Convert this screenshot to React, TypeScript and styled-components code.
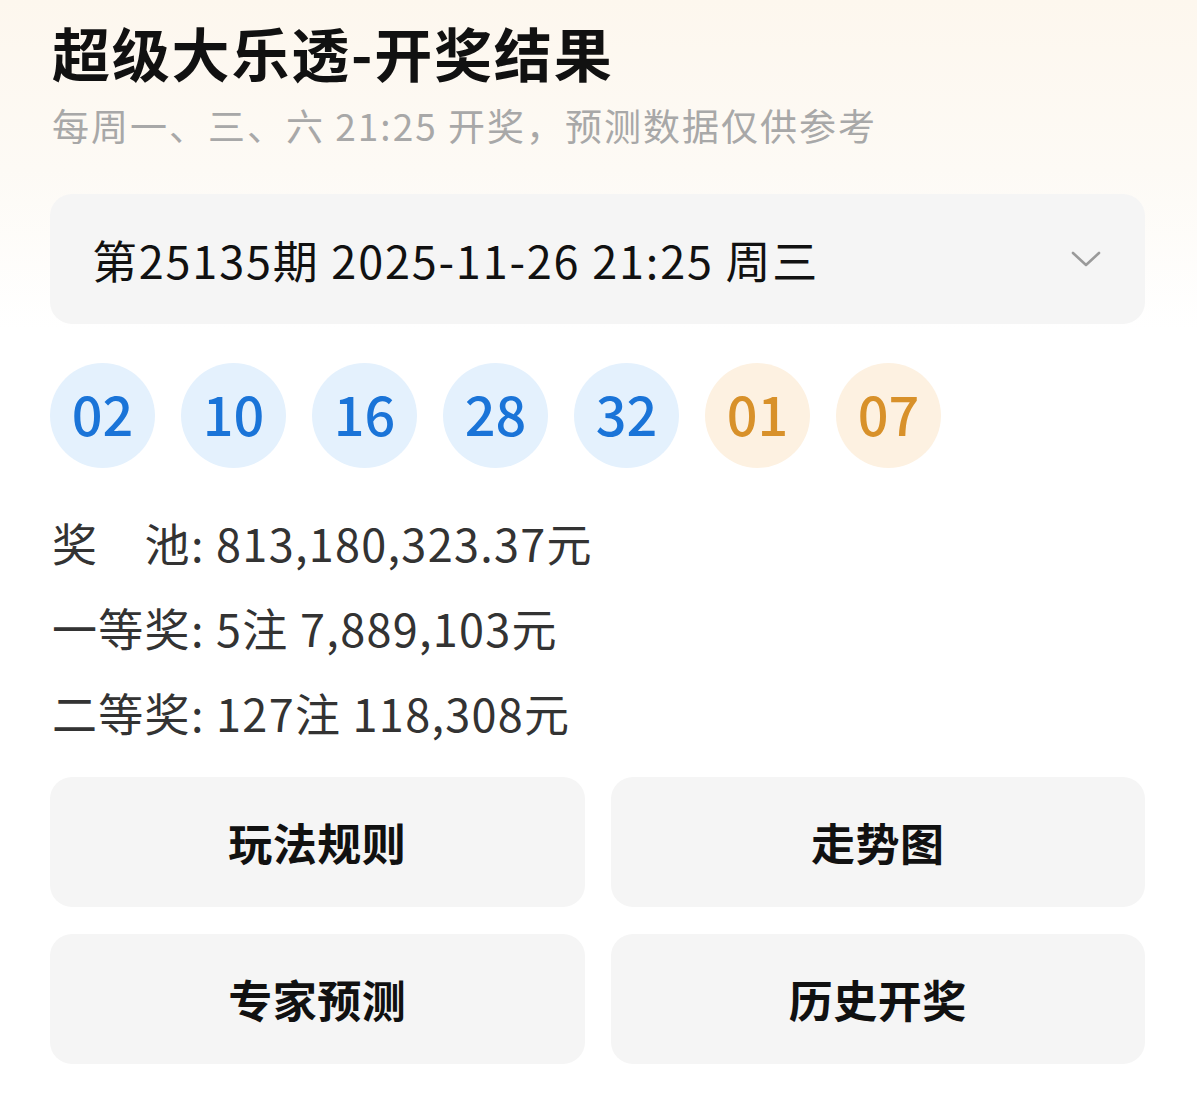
import styled, { createGlobalStyle } from 'styled-components';

const GlobalStyle = createGlobalStyle`
  html, body {
    margin: 0;
    padding: 0;
    background: #fff;
  }
  body {
    font-family: "Noto Sans CJK SC", "Noto Sans", sans-serif;
    color: #111;
  }
`;

const Page = styled.main`
  min-height: 1096px;
  box-sizing: border-box;
  padding: 20px 52px 0 50px;
  background: linear-gradient(180deg, #fdf7ee 0px, #fdfaf5 170px, #ffffff 330px);
`;

const Title = styled.h1`
  margin: 0 0 0 2px;
  font-size: 58px;
  line-height: 64px;
  font-weight: 700;
  color: #111;
  letter-spacing: 1.8px;
`;

const Subtitle = styled.p`
  margin: 16px 0 0 2px;
  font-size: 37px;
  line-height: 50px;
  color: #a8a8a8;
  letter-spacing: 2px;
`;

const Select = styled.div`
  margin-top: 44px;
  height: 130px;
  border-radius: 22px;
  background: #f5f5f5;
  display: flex;
  align-items: center;
  justify-content: space-between;
  padding: 0 44px 0 42px;
  font-size: 45px;
  color: #111;
  letter-spacing: 1.8px;
`;

const Balls = styled.div`
  margin-top: 39px;
  display: flex;
  gap: 26px;
`;

const Ball = styled.div<{ $back?: boolean }>`
  width: 105px;
  height: 105px;
  box-sizing: border-box;
  padding-bottom: 6px;
  border-radius: 50%;
  display: flex;
  align-items: center;
  justify-content: center;
  font-size: 54px;
  font-weight: 500;
  background: ${(p) => (p.$back ? '#fdf1e1' : '#e4f1fd')};
  color: ${(p) => (p.$back ? '#d8912a' : '#1a74d8')};
`;

const Info = styled.div`
  margin-top: 32px;
  margin-left: 2px;
`;

const Row = styled.div`
  font-size: 45px;
  line-height: 85px;
  color: #333;
  letter-spacing: 1.3px;
`;

const Actions = styled.div`
  margin-top: 22px;
  display: grid;
  grid-template-columns: 1fr 1fr;
  column-gap: 26px;
  row-gap: 27px;
`;

const Action = styled.button`
  height: 130px;
  border: none;
  border-radius: 22px;
  background: #f5f5f5;
  font-family: inherit;
  font-size: 44px;
  font-weight: 700;
  color: #111;
  letter-spacing: 0.5px;
  cursor: pointer;
`;

const draws = [
  { n: '02' },
  { n: '10' },
  { n: '16' },
  { n: '28' },
  { n: '32' },
  { n: '01', back: true },
  { n: '07', back: true },
];

const App = () => (
  <>
    <GlobalStyle />
    <Page>
      <Title>超级大乐透-开奖结果</Title>
      <Subtitle>每周一、三、六 21:25 开奖，预测数据仅供参考</Subtitle>
      <Select>
        <span>第25135期 2025-11-26 21:25 周三</span>
        <svg width="30" height="18" viewBox="0 0 30 18" fill="none">
          <path d="M2 3l13 12L28 3" stroke="#9a9a9a" strokeWidth="2.6" strokeLinecap="round" strokeLinejoin="round" />
        </svg>
      </Select>
      <Balls>
        {draws.map((d, i) => (
          <Ball key={i} $back={d.back}>
            {d.n}
          </Ball>
        ))}
      </Balls>
      <Info>
        <Row>奖　池: 813,180,323.37元</Row>
        <Row>一等奖: 5注 7,889,103元</Row>
        <Row>二等奖: 127注 118,308元</Row>
      </Info>
      <Actions>
        <Action>玩法规则</Action>
        <Action>走势图</Action>
        <Action>专家预测</Action>
        <Action>历史开奖</Action>
      </Actions>
    </Page>
  </>
);

export default App;
